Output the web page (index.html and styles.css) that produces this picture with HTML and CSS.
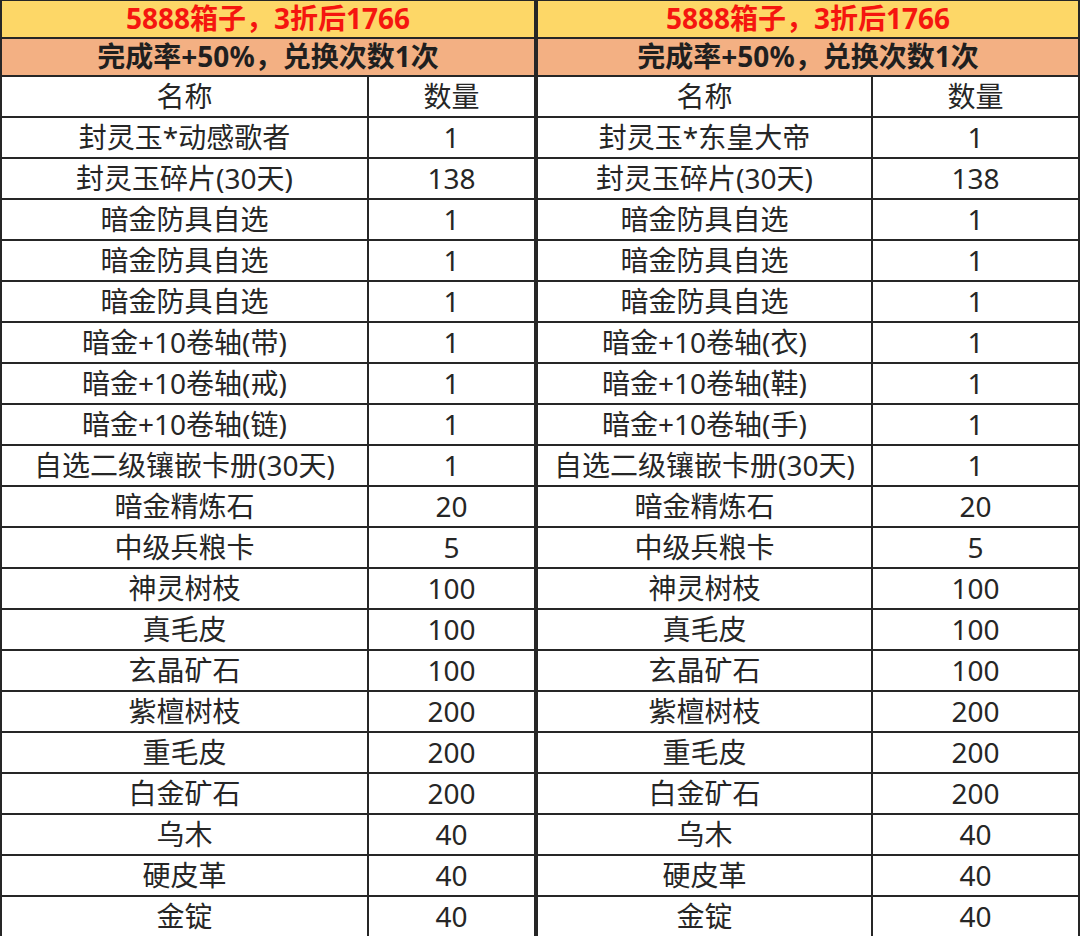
FILE: index.html
```html
<!DOCTYPE html>
<html lang="zh-CN">
<head>
<meta charset="utf-8">
<title>兑换箱子</title>
<link rel="stylesheet" href="styles.css">
</head>
<body>
<div class="sheet">
  <div class="panel panel-left">
    <div class="cell title">5888箱子，3折后1766</div>
    <div class="cell sub">完成率+50%，兑换次数1次</div>
    <div class="cell">名称</div><div class="cell">数量</div>
    <div class="cell">封灵玉*动感歌者</div><div class="cell">1</div>
    <div class="cell">封灵玉碎片(30天)</div><div class="cell">138</div>
    <div class="cell">暗金防具自选</div><div class="cell">1</div>
    <div class="cell">暗金防具自选</div><div class="cell">1</div>
    <div class="cell">暗金防具自选</div><div class="cell">1</div>
    <div class="cell">暗金+10卷轴(带)</div><div class="cell">1</div>
    <div class="cell">暗金+10卷轴(戒)</div><div class="cell">1</div>
    <div class="cell">暗金+10卷轴(链)</div><div class="cell">1</div>
    <div class="cell">自选二级镶嵌卡册(30天)</div><div class="cell">1</div>
    <div class="cell">暗金精炼石</div><div class="cell">20</div>
    <div class="cell">中级兵粮卡</div><div class="cell">5</div>
    <div class="cell">神灵树枝</div><div class="cell">100</div>
    <div class="cell">真毛皮</div><div class="cell">100</div>
    <div class="cell">玄晶矿石</div><div class="cell">100</div>
    <div class="cell">紫檀树枝</div><div class="cell">200</div>
    <div class="cell">重毛皮</div><div class="cell">200</div>
    <div class="cell">白金矿石</div><div class="cell">200</div>
    <div class="cell">乌木</div><div class="cell">40</div>
    <div class="cell">硬皮革</div><div class="cell">40</div>
    <div class="cell">金锭</div><div class="cell">40</div>
  </div>
  <div class="panel panel-right">
    <div class="cell title">5888箱子，3折后1766</div>
    <div class="cell sub">完成率+50%，兑换次数1次</div>
    <div class="cell">名称</div><div class="cell">数量</div>
    <div class="cell">封灵玉*东皇大帝</div><div class="cell">1</div>
    <div class="cell">封灵玉碎片(30天)</div><div class="cell">138</div>
    <div class="cell">暗金防具自选</div><div class="cell">1</div>
    <div class="cell">暗金防具自选</div><div class="cell">1</div>
    <div class="cell">暗金防具自选</div><div class="cell">1</div>
    <div class="cell">暗金+10卷轴(衣)</div><div class="cell">1</div>
    <div class="cell">暗金+10卷轴(鞋)</div><div class="cell">1</div>
    <div class="cell">暗金+10卷轴(手)</div><div class="cell">1</div>
    <div class="cell">自选二级镶嵌卡册(30天)</div><div class="cell">1</div>
    <div class="cell">暗金精炼石</div><div class="cell">20</div>
    <div class="cell">中级兵粮卡</div><div class="cell">5</div>
    <div class="cell">神灵树枝</div><div class="cell">100</div>
    <div class="cell">真毛皮</div><div class="cell">100</div>
    <div class="cell">玄晶矿石</div><div class="cell">100</div>
    <div class="cell">紫檀树枝</div><div class="cell">200</div>
    <div class="cell">重毛皮</div><div class="cell">200</div>
    <div class="cell">白金矿石</div><div class="cell">200</div>
    <div class="cell">乌木</div><div class="cell">40</div>
    <div class="cell">硬皮革</div><div class="cell">40</div>
    <div class="cell">金锭</div><div class="cell">40</div>
  </div>
</div>
</body>
</html>
```
FILE: styles.css
```css
html, body {
  margin: 0;
  padding: 0;
  background: #ffffff;
}
body {
  width: 1080px;
  height: 936px;
  overflow: hidden;
  font-family: "Noto Sans", "Noto Sans CJK SC", sans-serif;
  color: #262626;
}
.sheet {
  display: flex;
  width: 1080px;
}
.panel {
  display: grid;
  background: #262626;
  padding: 1px 2px 0 2px;
  gap: 2px;
  grid-template-rows: 36px 36px repeat(21, 39px);
}
.panel-left {
  width: 536px;
  box-sizing: border-box;
  grid-template-columns: 365px 165px;
}
.panel-right {
  width: 544px;
  box-sizing: border-box;
  grid-template-columns: 333px 205px;
}
.cell {
  background: #ffffff;
  display: flex;
  align-items: center;
  justify-content: center;
  font-size: 28px;
  line-height: 1;
  white-space: nowrap;
  padding-bottom: 2px;
  box-sizing: border-box;
}
.title {
  grid-column: 1 / -1;
  background: #fdd767;
  color: #f5150f;
  font-weight: bold;
  font-size: 28px;
}
.sub {
  grid-column: 1 / -1;
  background: #f3b083;
  color: #1f1f1f;
  font-weight: bold;
  font-size: 28px;
}
```
